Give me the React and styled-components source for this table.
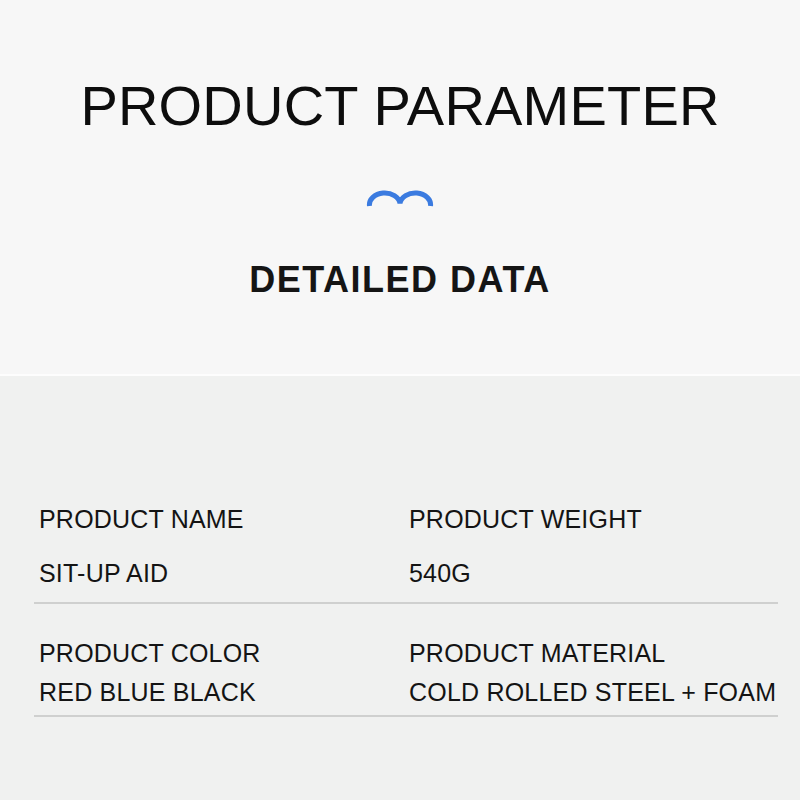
import React from 'react'
import styled, { createGlobalStyle } from 'styled-components'

const Global = createGlobalStyle`
  html, body { margin: 0; padding: 0; }
  body {
    width: 800px;
    height: 800px;
    overflow: hidden;
    background: #f0f1f0;
    font-family: "Liberation Sans", Arial, sans-serif;
    color: #111;
  }
`

const Page = styled.div`
  width: 800px;
  height: 800px;
  display: flex;
  flex-direction: column;
`

const Header = styled.header`
  height: 376px;
  background: #f7f7f7;
  border-bottom: 2px solid #fdfdfd;
  display: flex;
  flex-direction: column;
  align-items: center;
  padding-top: 76px;
  box-sizing: border-box;
`

const Title = styled.h1`
  margin: 0;
  font-size: 56px;
  font-weight: 400;
  letter-spacing: 0.2px;
  line-height: 60px;
  color: #0d0d0d;
`

const Wave = styled.svg`
  margin-top: 54px;
  width: 68px;
  height: 18px;
`

const Subtitle = styled.h2`
  margin: 52px 0 0;
  font-size: 36px;
  font-weight: 700;
  letter-spacing: 1.5px;
  line-height: 40px;
  color: #151515;
`

const Table = styled.section`
  padding: 130px 22px 0 34px;
  display: flex;
  flex-direction: column;
`

const Row = styled.div`
  display: grid;
  grid-template-columns: 370px 1fr;
  row-gap: ${p => p.$gap}px;
  padding: 0 0 ${p => p.$bottom}px 5px;
  border-bottom: 2px solid #cfd0cf;
  margin-bottom: ${p => p.$after}px;
`

const Cell = styled.div`
  font-size: 25px;
  line-height: 26px;
  letter-spacing: 0.2px;
  color: #141414;
  white-space: nowrap;
`

const rows = [
  { gap: 28, bottom: 16, after: 36, cells: ['PRODUCT NAME', 'PRODUCT WEIGHT', 'SIT-UP AID', '540G'] },
  { gap: 13, bottom: 10, after: 0, cells: ['PRODUCT COLOR', 'PRODUCT MATERIAL', 'RED BLUE BLACK', 'COLD ROLLED STEEL + FOAM'] },
]

export default function App() {
  return (
    <Page>
      <Global />
      <Header>
        <Title>PRODUCT PARAMETER</Title>
        <Wave viewBox="0 0 68 18">
          <path
            d="M3.5 16 A15 11.5 0 0 1 34 13.5 A15 11.5 0 0 1 64.5 16"
            fill="none"
            stroke="#3b7be0"
            strokeWidth="5"
          />
        </Wave>
        <Subtitle>DETAILED DATA</Subtitle>
      </Header>
      <Table>
        {rows.map((r, i) => (
          <Row key={i} $gap={r.gap} $bottom={r.bottom} $after={r.after}>
            {r.cells.map(c => <Cell key={c}>{c}</Cell>)}
          </Row>
        ))}
      </Table>
    </Page>
  )
}
